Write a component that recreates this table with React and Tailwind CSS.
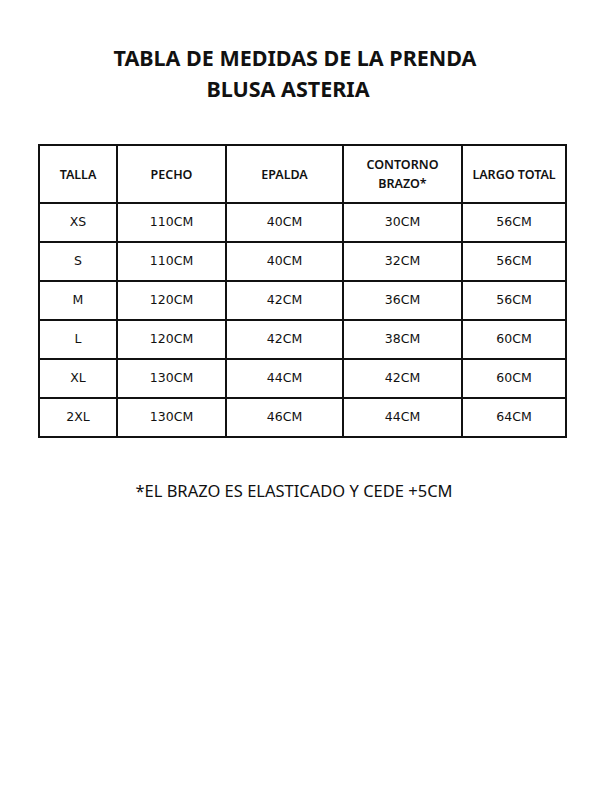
import React from 'react';

const rows = [
    ['XS', '110CM', '40CM', '30CM', '56CM'],
    ['S', '110CM', '40CM', '32CM', '56CM'],
    ['M', '120CM', '42CM', '36CM', '56CM'],
    ['L', '120CM', '42CM', '38CM', '60CM'],
    ['XL', '130CM', '44CM', '42CM', '60CM'],
    ['2XL', '130CM', '46CM', '44CM', '64CM'],
];

const widths = ['w-[78px]', 'w-[109px]', 'w-[117px]', 'w-[119px]', 'w-[104px]'];

const App = () => {
    return (
        <div className="w-[600px] h-[800px] bg-white text-[#111] font-['Noto_Sans',sans-serif]">
            {/* Title */}
            <div className="pt-[42px] text-center font-bold text-[21.5px] leading-[31px]">
                <p className="pr-[10px]">TABLA DE MEDIDAS DE LA PRENDA</p>
                <p className="pr-[24px]">BLUSA ASTERIA</p>
            </div>

            {/* Size table */}
            <table className="mt-[40px] ml-[38px] w-[527px] border-collapse table-fixed">
                <thead>
                    <tr className="h-[58px]">
                        {['TALLA', 'PECHO', 'EPALDA', 'CONTORNO BRAZO*', 'LARGO TOTAL'].map((h, i) => (
                            <th
                                key={h}
                                className={`${widths[i]} border-2 border-[#111] text-[12.5px] font-semibold leading-[19px] align-middle`}
                            >
                                {h === 'CONTORNO BRAZO*' ? (
                                    <>CONTORNO<br />BRAZO*</>
                                ) : h}
                            </th>
                        ))}
                    </tr>
                </thead>
                <tbody>
                    {rows.map((r) => (
                        <tr key={r[0]} className="h-[39px]">
                            {r.map((c, i) => (
                                <td
                                    key={i}
                                    className="border-2 border-[#111] text-center align-middle text-[12.5px] font-['DejaVu_Sans',sans-serif]"
                                >
                                    {c}
                                </td>
                            ))}
                        </tr>
                    ))}
                </tbody>
            </table>

            {/* Footnote */}
            <p className="mt-[41px] pr-[12px] text-center text-[16.5px] leading-[24px]">
                *EL BRAZO ES ELASTICADO Y CEDE +5CM
            </p>
        </div>
    );
};

export default App;
